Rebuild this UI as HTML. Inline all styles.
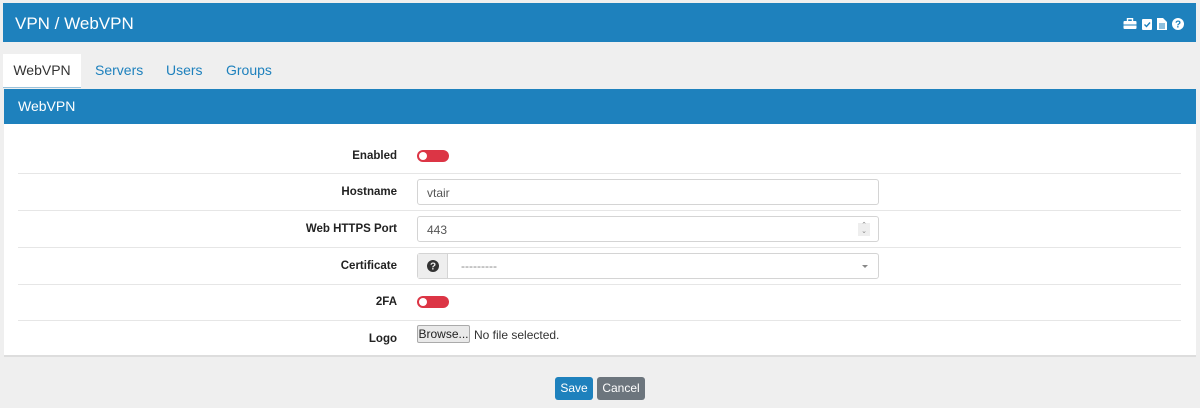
<!DOCTYPE html>
<html><head><meta charset="utf-8"><style>
*{box-sizing:border-box;margin:0;padding:0}
body{width:1200px;height:408px;background:#efefef;font-family:"Liberation Sans",Arial,sans-serif;position:relative;overflow:hidden}
.top{position:absolute;left:3px;top:3px;width:1193px;height:39px;background:#1e81bd;color:#fff;font-size:17px;padding:11px 0 0 12px}
.icons{position:absolute;right:12px;top:15px;display:flex;gap:5px}
.tabs{position:absolute;left:3px;top:54px;height:34px;font-size:14px}
.tab{position:absolute;top:0;height:34px;line-height:33px;color:#1e81bd}
.tab.a{background:#fff;color:#333;left:0;width:78px;text-align:center;border-bottom:1px solid #9bc3dc}
.ph{position:absolute;left:4px;top:89px;width:1192px;height:35px;background:#1e81bd;color:#fff;font-size:14px;padding:9px 0 0 14px}
.pb{position:absolute;left:4px;top:124px;width:1192px;height:233px;background:#fff;border-bottom:2px solid #ddd}
.row{position:absolute;left:14px;width:1163px;border-top:1px solid #e6e6e6}
.lbl{position:absolute;right:799px;font-size:11.5px;font-weight:bold;color:#222;text-align:right;white-space:nowrap}
.tog{position:absolute;left:413px;width:32px;height:12px;border-radius:6px;background:#dc3545}
.tog:after{content:"";position:absolute;left:2px;top:2px;width:8px;height:8px;border-radius:50%;background:#fff}
.inp{position:absolute;left:413px;width:462px;height:26px;border:1px solid #d4d4d4;border-radius:3px;font-size:12px;color:#555;padding:6px 0 0 9px}
.btn{position:absolute;top:377px;height:23px;color:#fff;font-size:12px;line-height:23px;text-align:center;border-radius:3px}
</style></head><body>
<div class="top">VPN / WebVPN
<div class="icons">
<svg width="14" height="12" viewBox="0 0 13 12"><rect x="0" y="3" width="13" height="8" rx="1" fill="#fff"/><rect x="4" y="0.7" width="5" height="3" fill="none" stroke="#fff" stroke-width="1.4"/><rect x="0" y="6.5" width="13" height="1" fill="#1e81bd"/></svg>
<svg width="10" height="12" viewBox="0 0 10 12"><rect x="0" y="1" width="10" height="11" rx="1" fill="#fff"/><path d="M2.5 6.5l2 2 3.5-4" stroke="#1e81bd" stroke-width="1.4" fill="none"/></svg>
<svg width="10" height="12" viewBox="0 0 10 12"><path d="M0 0h6l4 4v8H0z" fill="#fff"/><path d="M2 6h6M2 8h6M2 10h6" stroke="#1e81bd"/></svg>
<svg width="12" height="12" viewBox="0 0 12 12"><circle cx="6" cy="6" r="6" fill="#fff"/><text x="6" y="9.5" font-size="10" font-weight="bold" text-anchor="middle" fill="#1e81bd" font-family="Liberation Sans">?</text></svg>
</div></div>
<div class="tabs">
<div class="tab a">WebVPN</div>
<div class="tab" style="left:92px">Servers</div>
<div class="tab" style="left:163px">Users</div>
<div class="tab" style="left:223px">Groups</div>
</div>
<div class="ph">WebVPN</div>
<div class="pb">
<div class="lbl" style="top:26px">Enabled</div><div class="tog" style="top:26px"></div>
<div class="row" style="top:49px"></div>
<div class="lbl" style="top:62px">Hostname</div><div class="inp" style="top:55px">vtair</div>
<div class="row" style="top:86px"></div>
<div class="lbl" style="top:99px">Web HTTPS Port</div><div class="inp" style="top:92px">443
<div style="position:absolute;right:8px;top:6px;width:12px;height:13px;background:#eee;font-size:7px;line-height:6px;text-align:center;color:#888">⌃<br>⌄</div></div>
<div class="row" style="top:123px"></div>
<div class="lbl" style="top:136px">Certificate</div>
<div class="inp" style="top:129px;padding:0">
<div style="position:absolute;left:0;top:0;width:30px;height:24px;background:#eee;border-right:1px solid #d4d4d4"><svg style="position:absolute;left:9px;top:6px" width="12" height="12" viewBox="0 0 12 12"><circle cx="6" cy="6" r="6" fill="#333"/><text x="6" y="9.5" font-size="10" font-weight="bold" text-anchor="middle" fill="#eee" font-family="Liberation Sans">?</text></svg></div>
<div style="position:absolute;left:43px;top:5px;color:#888">---------</div>
<div style="position:absolute;right:10px;top:11px;border:3px solid transparent;border-top:3px solid #888"></div>
</div>
<div class="row" style="top:160px"></div>
<div class="tog" style="top:172px"></div><div class="lbl" style="top:172px">2FA</div>
<div class="row" style="top:196px"></div>
<div class="lbl" style="top:209px">Logo</div>
<div style="position:absolute;left:413px;top:201px;width:53px;height:18px;border:1px solid #aaa;border-radius:2px;background:#e9e9e9;font-size:12px;line-height:16px;text-align:center;color:#222">Browse...</div>
<div style="position:absolute;left:470px;top:204px;font-size:12px;color:#333">No file selected.</div>
</div>
<div class="btn" style="left:555px;width:38px;background:#1e81bd">Save</div>
<div class="btn" style="left:597px;width:48px;background:#6c757d">Cancel</div>
</body></html>
